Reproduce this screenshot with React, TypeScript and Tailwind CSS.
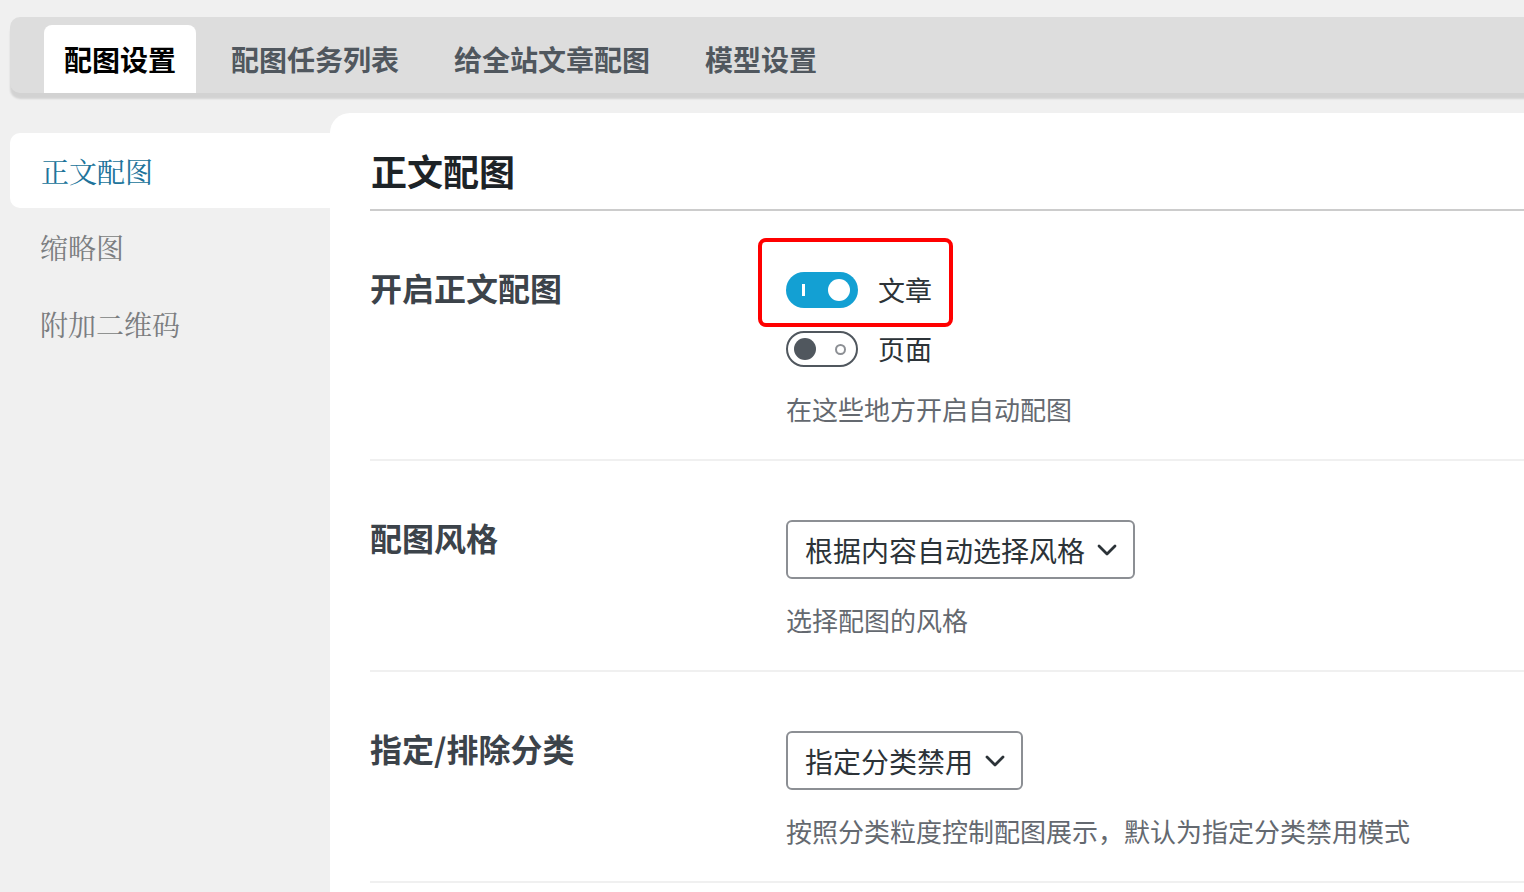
import React from "react";

const sans = { fontFamily: '"Noto Sans CJK SC", "Noto Sans", sans-serif' };
const serif = { fontFamily: '"Noto Serif CJK SC", "Liberation Serif", "Noto Sans CJK SC", serif' };

const tabs = ["配图设置", "配图任务列表", "给全站文章配图", "模型设置"];
const sideItems = ["正文配图", "缩略图", "附加二维码"];

function Chevron() {
    return (
        <svg width="20" height="12" viewBox="0 0 20 12" fill="none">
            <path d="M2 2 L10 10 L18 2" stroke="#2c3338" strokeWidth="2.8" strokeLinecap="round" strokeLinejoin="round" />
        </svg>
    );
}

function Toggle({ on }: { on: boolean }) {
    if (on) {
        return (
            <div className="relative w-[72px] h-[36px] rounded-full bg-[#13a0d3] flex items-center justify-between px-[8px]">
                <div className="w-[3px] h-[12px] bg-white ml-[8px]" />
                <div className="w-[22px] h-[22px] rounded-full bg-white" />
            </div>
        );
    }
    return (
        <div className="w-[72px] h-[36px] rounded-full border-2 border-[#50575e] bg-white flex items-center justify-between pl-[6px] pr-[10px]">
            <div className="w-[22px] h-[22px] rounded-full bg-[#50575e]" />
            <div className="w-[11px] h-[11px] rounded-full border-2 border-[#8c8f94]" />
        </div>
    );
}

function Select({ label }: { label: string }) {
    return (
        <div className="inline-flex items-center h-[59px] border-2 border-[#8c8f94] rounded-[6px] pl-[17px] pr-[16px] gap-[12px] bg-white">
            <span className="text-[28px] text-[#2c3338] leading-none">{label}</span>
            <Chevron />
        </div>
    );
}

export default function App() {
    return (
        <div className="h-[892px] w-full overflow-hidden bg-[#f0f0f0]" style={sans}>
            <div className="pt-[17px] pl-[10px]">
                <div className="flex items-end h-[76px] mr-[-30px] bg-[#dddddd] rounded-[10px] shadow-[0_6px_2px_rgba(0,0,0,0.12)] pl-[34px] gap-[15px]">
                    {tabs.map((t, i) => (
                        <div
                            key={t}
                            className={
                                i === 0
                                    ? "h-[68px] px-[20px] flex items-center bg-white rounded-t-[8px] text-[28px] font-bold text-black"
                                    : "h-[68px] px-[20px] flex items-center text-[28px] font-bold text-[#50575e]"
                            }
                        >
                            {t}
                        </div>
                    ))}
                </div>
            </div>

            <div className="flex mt-[20px] h-full">
                <div className="w-[330px] pl-[10px] pt-[20px] shrink-0" style={serif}>
                    {sideItems.map((s, i) => (
                        <div
                            key={s}
                            className={
                                i === 0
                                    ? "h-[75px] flex items-center pl-[31px] bg-white rounded-l-[10px] text-[28px] text-[#20739a]"
                                    : "h-[77px] flex items-center pl-[30px] text-[28px] text-[#7b7d80]"
                            }
                        >
                            {s}
                        </div>
                    ))}
                </div>

                <div className="flex-1 bg-white rounded-tl-[20px] pl-[40px]">
                    <div className="pt-[33px] pb-[15px] border-b-2 border-[#cccccc]">
                        <h1 className="text-[36px] font-bold text-[#1d2327] leading-[48px] ml-[1px]">正文配图</h1>
                    </div>

                    {/* row 1 */}
                    <div className="flex border-b-2 border-[#f0f0f0]">
                        <div className="w-[416px] pt-[56px] text-[32px] font-semibold text-[#3c434a] leading-[40px]">开启正文配图</div>
                        <div className="relative pt-[61px] pb-[32px]">
                            <div className="absolute left-[-28px] top-[27px] w-[195px] h-[89px] border-[4px] border-[#ff0000] rounded-[8px]" />
                            <div className="flex items-center h-[36px] gap-[20px]">
                                <Toggle on={true} />
                                <span className="text-[27px] text-[#2c3338]">文章</span>
                            </div>
                            <div className="flex items-center h-[36px] gap-[20px] mt-[23px]">
                                <Toggle on={false} />
                                <span className="text-[27px] text-[#2c3338]">页面</span>
                            </div>
                            <div className="mt-[24px] text-[26px] leading-[36px] text-[#646970]">在这些地方开启自动配图</div>
                        </div>
                    </div>

                    {/* row 2 */}
                    <div className="flex border-b-2 border-[#f0f0f0]">
                        <div className="w-[416px] pt-[56px] text-[32px] font-semibold text-[#3c434a] leading-[40px]">配图风格</div>
                        <div className="pt-[59px] pb-[32px]">
                            <Select label="根据内容自动选择风格" />
                            <div className="mt-[23px] text-[26px] leading-[36px] text-[#646970]">选择配图的风格</div>
                        </div>
                    </div>

                    {/* row 3 */}
                    <div className="flex border-b-2 border-[#f0f0f0]">
                        <div className="w-[416px] pt-[56px] text-[32px] font-semibold text-[#3c434a] leading-[40px]">指定/排除分类</div>
                        <div className="pt-[59px] pb-[32px]">
                            <Select label="指定分类禁用" />
                            <div className="mt-[23px] text-[26px] leading-[36px] text-[#646970]">按照分类粒度控制配图展示，默认为指定分类禁用模式</div>
                        </div>
                    </div>
                </div>
            </div>
        </div>
    );
}
